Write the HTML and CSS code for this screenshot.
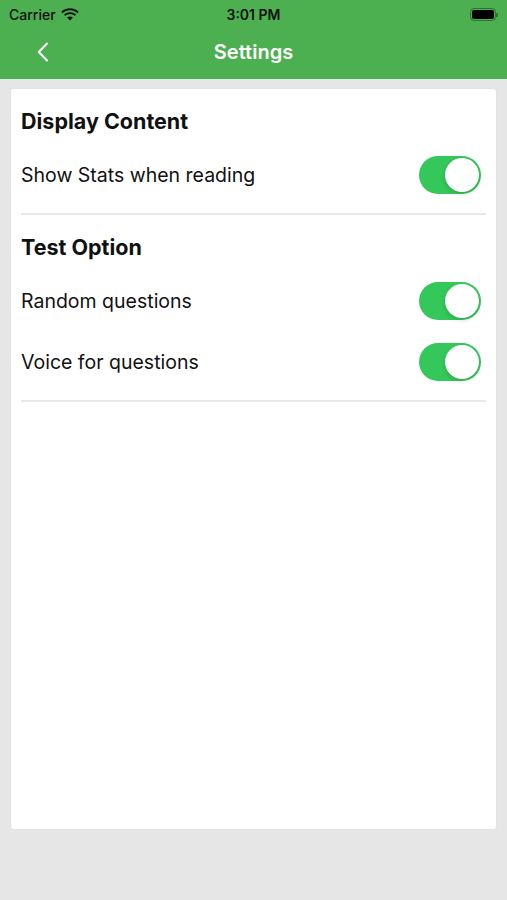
FILE: index.html
```html
<!DOCTYPE html>
<html lang="en">
<head>
    <meta charset="UTF-8">
    <title>Settings</title>
    <link rel="stylesheet" href="styles.css">
</head>
<body>
<div class="header">
    <div class="statusbar">
        <div class="carrier">
            Carrier
            <svg class="wifi" width="18" height="13" viewBox="0 0 18 13">
                <path d="M9 2.2c2.9 0 5.5 1.1 7.5 3l1.3-1.4C15.5 1.6 12.4.3 9 .3S2.5 1.6.2 3.8l1.3 1.4c2-1.9 4.6-3 7.5-3z"/>
                <path d="M9 6.1c1.8 0 3.4.7 4.7 1.8l1.3-1.4C13.4 5 11.3 4.2 9 4.2S4.6 5 3 6.5l1.3 1.4C5.6 6.8 7.2 6.1 9 6.1z"/>
                <path d="M9 12.6l2.9-3c-.8-.7-1.8-1.1-2.9-1.1s-2.1.4-2.9 1.1z"/>
            </svg>
        </div>
        <div class="time">3:01 PM</div>
        <div class="battery"><span class="level"></span></div>
    </div>
    <div class="navbar">
        <svg class="back" width="12" height="20" viewBox="0 0 12 20">
            <path d="M10 1.5L1.8 10l8.2 8.5" fill="none" stroke="#fff" stroke-width="2" stroke-linecap="round" stroke-linejoin="round"/>
        </svg>
        <div class="title">Settings</div>
    </div>
</div>

<div class="page">
    <div class="card">
        <div class="section">
            <h2>Display Content</h2>
            <div class="row">
                <span>Show Stats when reading</span>
                <label class="switch"><input type="checkbox" checked><span class="knob"></span></label>
            </div>
        </div>
        <div class="section">
            <h2>Test Option</h2>
            <div class="row">
                <span>Random questions</span>
                <label class="switch"><input type="checkbox" checked><span class="knob"></span></label>
            </div>
            <div class="row">
                <span>Voice for questions</span>
                <label class="switch"><input type="checkbox" checked><span class="knob"></span></label>
            </div>
        </div>
    </div>
</div>
</body>
</html>
```

FILE: styles.css
```css
* {
    box-sizing: border-box;
}

body {
    margin: 0;
    font-family: Inter, "Liberation Sans", Arial, sans-serif;
    background-color: #e6e6e6;
    color: #111;
}

.header {
    background-color: #4caf50;
    height: 79px;
}

.statusbar {
    height: 28px;
    display: flex;
    align-items: center;
    justify-content: space-between;
    padding: 0 9px 0 9px;
    font-size: 14px;
    font-weight: 500;
    color: #111;
    position: relative;
}

.carrier {
    display: flex;
    align-items: center;
    gap: 5px;
}

.wifi {
    fill: #111;
}

.time {
    position: absolute;
    left: 0;
    right: 0;
    text-align: center;
    font-weight: 600;
}

.battery {
    width: 26px;
    height: 13px;
    border: 1px solid rgba(0, 0, 0, 0.35);
    border-radius: 4px;
    padding: 1px;
    position: relative;
    margin-right: 2px;
}

.battery::after {
    content: "";
    position: absolute;
    right: -3px;
    top: 4px;
    width: 2px;
    height: 4px;
    background: rgba(0, 0, 0, 0.35);
    border-radius: 0 1px 1px 0;
}

.level {
    display: block;
    height: 100%;
    background: #000;
    border-radius: 2px;
}

.navbar {
    height: 51px;
    display: flex;
    align-items: center;
    justify-content: center;
    position: relative;
}

.back {
    position: absolute;
    left: 37px;
    top: 14px;
}

.title {
    color: #fff;
    font-size: 20px;
    font-weight: 600;
    margin-top: -3px;
}

.page {
    padding: 10px 11px 71px 11px;
}

.card {
    background: #fff;
    height: 740px;
    padding: 0 10px;
    border-radius: 2px;
    box-shadow: 0 0 1px rgba(0, 0, 0, 0.15);
}

.section {
    border-bottom: 2px solid #e8e8e8;
    padding-bottom: 8px;
}

h2 {
    margin: 0;
    font-size: 21.5px;
    font-weight: 700;
    line-height: 24px;
    padding: 20px 0 11px 0;
}

.row {
    display: flex;
    align-items: center;
    justify-content: space-between;
    height: 61px;
    font-size: 19.5px;
}

.switch {
    position: relative;
    width: 62px;
    height: 38px;
    margin-right: 5px;
    display: block;
}

.switch input {
    display: none;
}

.knob {
    position: absolute;
    inset: 0;
    border-radius: 19px;
    background: #ccc;
}

.knob::after {
    content: "";
    position: absolute;
    top: 2px;
    left: 2px;
    width: 34px;
    height: 34px;
    border-radius: 50%;
    background: #fff;
    box-shadow: 0 2px 4px rgba(0, 0, 0, 0.15);
}

.switch input:checked + .knob {
    background: #34c759;
}

.switch input:checked + .knob::after {
    left: 26px;
}
```
